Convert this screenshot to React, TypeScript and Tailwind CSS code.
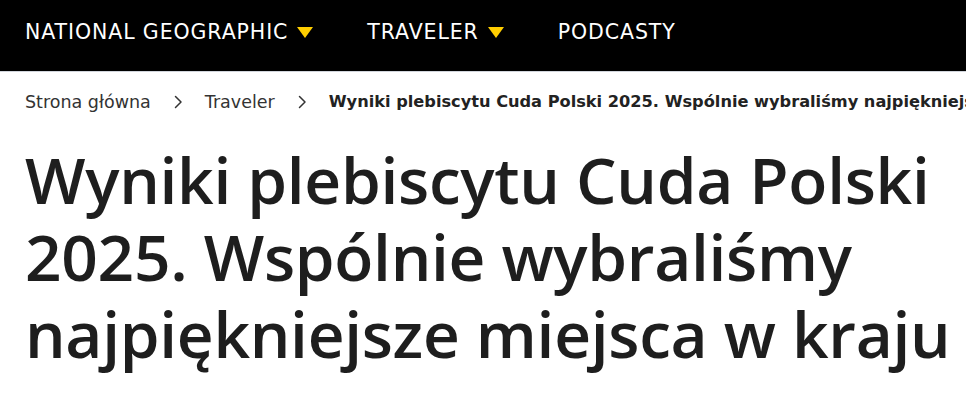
import { Fragment } from "react";

const NAV = [
  { label: "NATIONAL GEOGRAPHIC", caret: true },
  { label: "TRAVELER", caret: true },
  { label: "PODCASTY", caret: false },
];

const CRUMBS = ["Strona główna", "Traveler"];

const TITLE =
  "Wyniki plebiscytu Cuda Polski 2025. Wspólnie wybraliśmy najpiękniejsze miejsca w kraju";

const TITLE_LINES = [
  "Wyniki plebiscytu Cuda Polski",
  "2025. Wspólnie wybraliśmy",
  "najpiękniejsze miejsca w kraju",
];

function Caret() {
  return (
    <svg width="16" height="11" viewBox="0 0 16 11" className="shrink-0" aria-hidden="true">
      <path d="M0 0h16L8 11z" fill="#ffce00" />
    </svg>
  );
}

function Chevron() {
  return (
    <svg width="10" height="16" viewBox="0 0 10 16" fill="none" className="shrink-0" aria-hidden="true">
      <path d="M2.5 2.5l5.5 5.5-5.5 5.5" stroke="#333" strokeWidth="1.5" strokeLinecap="round" strokeLinejoin="round" />
    </svg>
  );
}

export default function App() {
  return (
    <div className="min-h-[407px] overflow-hidden bg-white">
      <header className="flex h-[72px] items-start border-b border-gray-300 bg-black px-[25px] pt-[18px] font-['DejaVu_Sans',sans-serif]">
        <nav className="flex items-center gap-[54px]">
          {NAV.map((item) => (
            <a key={item.label} href="#" className="flex items-center gap-[9px] text-[20.5px] leading-[28px] tracking-[0.9px] text-white">
              {item.label}
              {item.caret ? <Caret /> : null}
            </a>
          ))}
        </nav>
      </header>

      <div className="flex items-center gap-[22px] overflow-hidden whitespace-nowrap px-[25px] pt-[17px] font-['DejaVu_Sans',sans-serif] text-[17.5px]">
        {CRUMBS.map((c) => (
          <Fragment key={c}>
            <a href="#" className="shrink-0 text-[#333]">{c}</a>
            <Chevron />
          </Fragment>
        ))}
        <span className="text-[16.2px] font-bold text-[#222]">{TITLE}</span>
      </div>

      <h1 className="whitespace-nowrap px-[25px] pt-[26px] font-['Open_Sans',sans-serif] text-[64px] font-semibold leading-[77px] tracking-[-0.3px] text-[#1e1e1e]">
        {TITLE_LINES.map((line, i) => (
          <Fragment key={line}>
            {i > 0 ? <br /> : null}
            {line}
          </Fragment>
        ))}
      </h1>
    </div>
  );
}
